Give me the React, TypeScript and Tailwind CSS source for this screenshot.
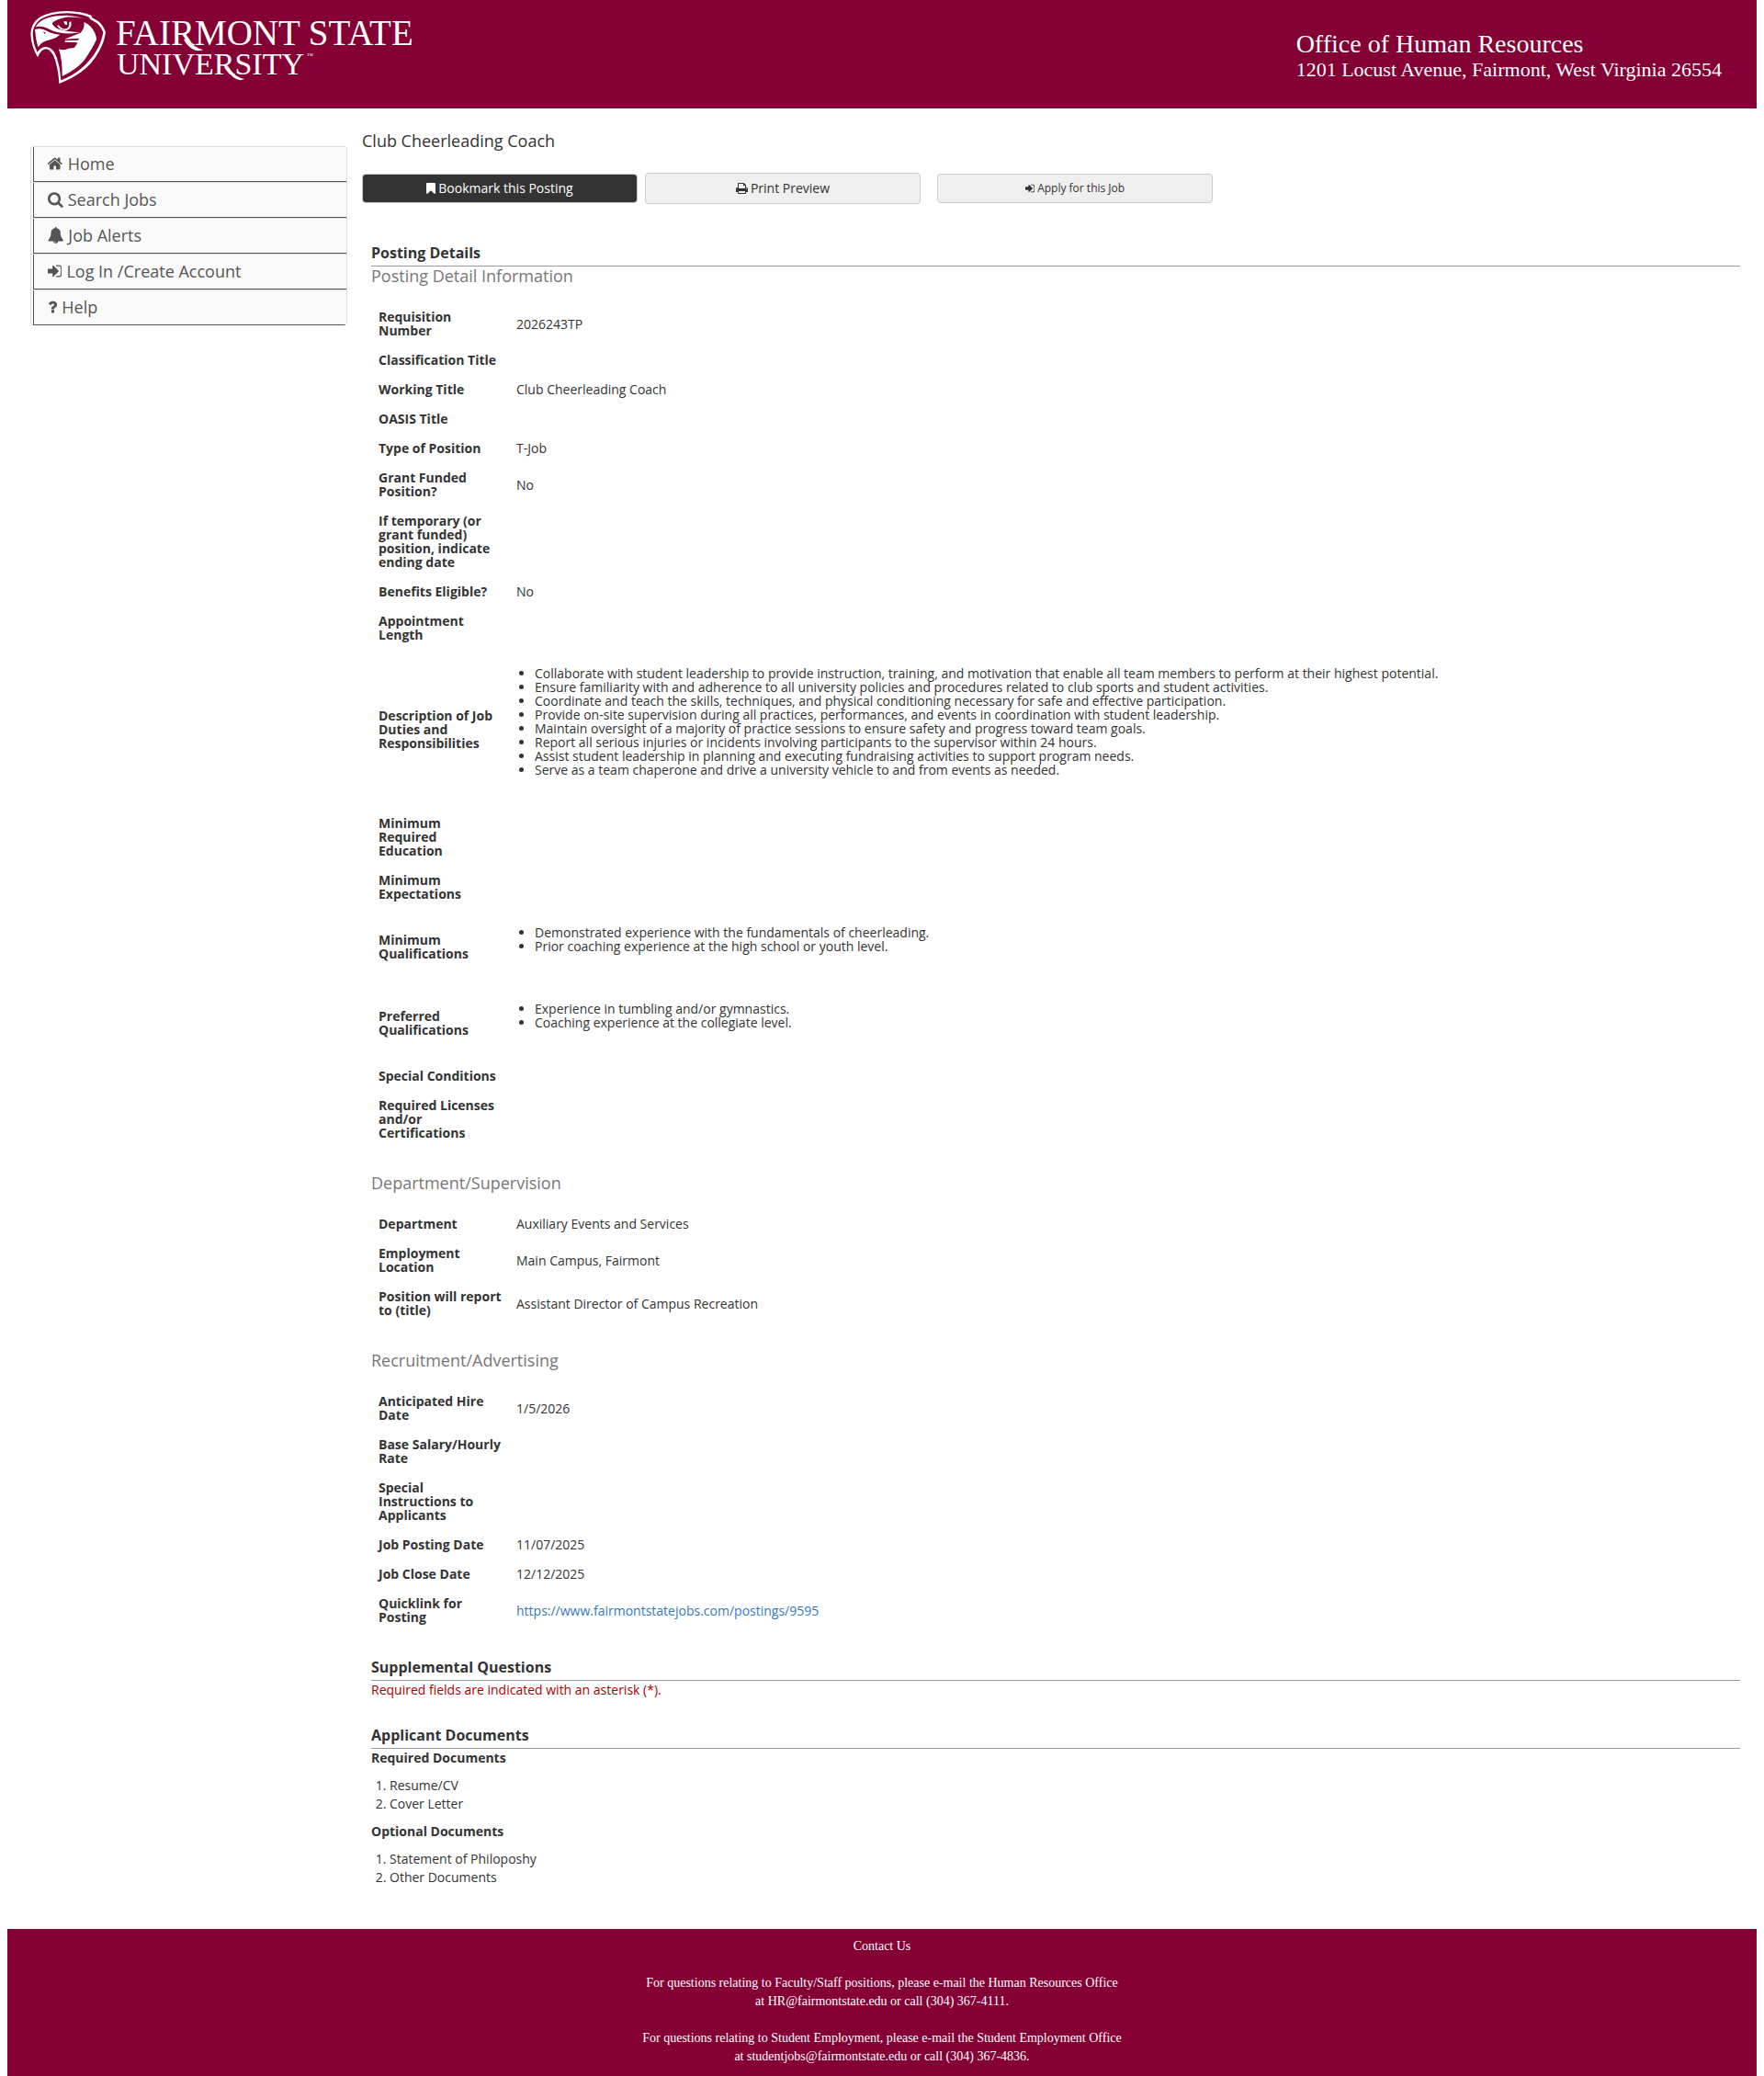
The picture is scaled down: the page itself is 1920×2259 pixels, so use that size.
import type { ReactNode } from "react";

type IconName = "home" | "search" | "bell" | "signIn" | "question" | "bookmark" | "print";

const ICONS: Record<IconName, { box: string; d: string }> = {
  home: {
    box: "64 0 1664 1792",
    d: "M1408 992v480q0 26-19 45t-45 19h-384v-384h-256v384h-384q-26 0-45-19t-19-45v-480q0-1 .5-3t.5-3l575-474 575 474q1 2 1 6zm223-69l-62 74q-8 9-21 11h-3q-13 0-21-7l-692-577-692 577q-12 8-24 7-13-2-21-11l-62-74q-8-10-7-23.5t11-21.5l719-599q32-26 76-26t76 26l244 204v-195q0-14 9-23t23-9h192q14 0 23 9t9 23v408l219 182q10 8 11 21.5t-7 23.5z",
  },
  search: {
    box: "64 0 1664 1792",
    d: "M1216 832q0-185-131.5-316.5t-316.5-131.5-316.5 131.5-131.5 316.5 131.5 316.5 316.5 131.5 316.5-131.5 131.5-316.5zm512 832q0 52-38 90t-90 38q-54 0-90-38l-343-342q-179 124-399 124-143 0-273.5-55.5t-225-150-150-225-55.5-273.5 55.5-273.5 150-225 225-150 273.5-55.5 273.5 55.5 225 150 150 225 55.5 273.5q0 220-124 399l343 343q37 37 37 90z",
  },
  bell: {
    box: "32 0 1728 1792",
    d: "M912 1696q0-16-16-16-59 0-101.5-42.5t-42.5-101.5q0-16-16-16t-16 16q0 73 51.5 124.5t124.5 51.5q16 0 16-16zm816-288q0 52-38 90t-90 38h-448q0 106-75 181t-181 75-181-75-75-181h-448q-52 0-90-38t-38-90q50-42 91-88t85-119.5 74.5-158.5 50-206 19.5-260q0-152 117-282.5t307-158.5q-8-19-8-39 0-40 28-68t68-28 68 28 28 68q0 20-8 39 190 28 307 158.5t117 282.5q0 139 19.5 260t50 206 74.5 158.5 85 119.5 91 88z",
  },
  signIn: {
    box: "128 0 1536 1792",
    d: "M1312 896q0 26-19 45l-544 544q-19 19-45 19t-45-19-19-45v-288h-448q-26 0-45-19t-19-45v-384q0-26 19-45t45-19h448v-288q0-26 19-45t45-19 45 19l544 544q19 19 19 45zm352-352v704q0 119-84.5 203.5t-203.5 84.5h-320q-13 0-22.5-9.5t-9.5-22.5q0-4-1-20t-.5-26.5 3-23.5 10-19.5 20.5-6.5h320q66 0 113-47t47-113v-704q0-66-47-113t-113-47h-312l-11.5-1-11.5-3-8-5.5-7-9-2-13.5q0-4-1-20t-.5-26.5 3-23.5 10-19.5 20.5-6.5h320q119 0 203.5 84.5t84.5 203.5z",
  },
  question: {
    box: "384 0 1024 1792",
    d: "M1088 1256v240q0 16-12 28t-28 12h-240q-16 0-28-12t-12-28v-240q0-16 12-28t28-12h240q16 0 28 12t12 28zm316-600q0 54-15.5 101t-35 76.5-55 59.5-57.5 43.5-61 35.5q-41 23-68.5 65t-27.5 67q0 17-12 32.5t-28 15.5h-240q-15 0-25.5-18.5t-10.5-37.5v-45q0-83 65-156.5t143-108.5q59-27 84-56t25-76q0-42-46.5-74t-107.5-32q-65 0-108 29-35 25-107 115-13 16-31 16-12 0-25-8l-164-125q-13-10-15.5-25t5.5-28q160-266 464-266 80 0 161 31t146 83 106 127.5 41 158.5z",
  },
  bookmark: {
    box: "256 0 1280 1792",
    d: "M1420 128q23 0 44 9 33 13 52.5 41t19.5 62v1289q0 34-19.5 62t-52.5 41q-19 8-44 8-48 0-83-32l-441-424-441 424q-36 33-83 33-23 0-44-9-33-13-52.5-41t-19.5-62v-1289q0-34 19.5-62t52.5-41q21-9 44-9h1048z",
  },
  print: {
    box: "64 0 1664 1792",
    d: "M448 1536h896v-256h-896v256zm0-640h896v-384h-160q-40 0-68-28t-28-68v-160h-640v640zm1152 64q0-26-19-45t-45-19-45 19-19 45 19 45 45 19 45-19 19-45zm128 0v416q0 13-9.5 22.5t-22.5 9.5h-224v160q0 40-28 68t-68 28h-960q-40 0-68-28t-28-68v-160h-224q-13 0-22.5-9.5t-9.5-22.5v-416q0-79 56.5-135.5t135.5-56.5h64v-544q0-40 28-68t68-28h672q40 0 88 20t76 48l152 152q28 28 48 76t20 88v256h64q79 0 135.5 56.5t56.5 135.5z",
  },
};

function Icon({ name, className }: { name: IconName; className: string }) {
  return (
    <svg viewBox={ICONS[name].box} className={`w-auto shrink-0 fill-current ${className}`} aria-hidden="true">
      <path d={ICONS[name].d} />
    </svg>
  );
}

function Logo() {
  return (
    <svg viewBox="0 0 440 96" className="h-24 w-[440px] shrink-0" role="img" aria-label="Fairmont State University">
      <g transform="scale(0.33333)">
        <path
          fill="#fff"
          d="M63 187Q42 152 40 112Q40 78 68 57Q104 36 160 36Q204 37 238 50L241 58L262 70Q276 82 285 104Q281 138 262 170Q241 208 205 235Q174 258 133 273Q131 232 120 196Q110 165 92 160Q74 160 63 187Z"
        />
        <path
          fill="#840034"
          d="M62 170Q47 140 47 108Q48 82 72 63Q105 44 160 43Q200 44 231 56L235 63L257 76Q270 88 277 105Q272 137 255 165Q233 202 200 228Q173 249 139 262Q138 226 126 190Q116 157 92 153Q73 153 62 170Z"
        />
        <path
          fill="#fff"
          d="M56 88Q68 66 100 57Q124 50 160 50Q190 52 212 60Q180 55 156 56Q122 62 110 76Q114 90 137 97Q172 107 203 105L180 109Q132 112 102 96Q76 82 56 88Z"
        />
        <path
          fill="#fff"
          d="M54 96Q76 90 95 102Q112 112 136 113Q124 125 106 129Q76 134 64 154Q56 126 54 96Z"
        />
        <path
          fill="#fff"
          d="M132 160Q146 166 164 158L182 156Q190 148 193 139L152 137L152 133L195 131L199 125L150 128L203 107Q218 92 214 72Q238 82 250 108Q255 120 255 129Q240 162 214 198Q188 228 143 249Q144 198 132 160Z"
        />
        <path fill="#fff" d="M132 82Q140 96 154 94Q168 92 166 72L172 70Q176 92 160 98Q138 102 126 84ZM148 70Q150 84 160 80L158 70Z" />
        <path fill="#840034" d="M80 103L90 107L86 111Z" />
      </g>
      <g fill="#fff" className="font-['Liberation_Serif',serif]">
        <text x="106" y="49" fontSize="39">FAIRMONT STATE</text>
        <text x="107" y="81" fontSize="34">UNIVERSITY</text>
        <text x="314" y="63" fontSize="7">™</text>
      </g>
      <path fill="#fff" d="M184 42Q191 52 201 54Q195 57 189 53Q183 49 180 43ZM228 72Q235 84 246 86Q240 89 234 84Q227 78 224 73Z" />
    </svg>
  );
}

const MENU: { icon: IconName; label: string }[] = [
  { icon: "home", label: "Home" },
  { icon: "search", label: "Search Jobs" },
  { icon: "bell", label: "Job Alerts" },
  { icon: "signIn", label: "Log In /Create Account" },
  { icon: "question", label: "Help" },
];

function Bullets({ items }: { items: string[] }) {
  return (
    <ul className="mt-2.5 mb-[26px] list-disc pl-5">
      {items.map((item) => (
        <li key={item}>{item}</li>
      ))}
    </ul>
  );
}

type Row = [string, ReactNode?];

const DETAILS: Row[] = [
  ["Requisition Number", "2026243TP"],
  ["Classification Title"],
  ["Working Title", "Club Cheerleading Coach"],
  ["OASIS Title"],
  ["Type of Position", "T-Job"],
  ["Grant Funded Position?", "No"],
  ["If temporary (or grant funded) position, indicate ending date"],
  ["Benefits Eligible?", "No"],
  ["Appointment Length"],
  [
    "Description of Job Duties and Responsibilities",
    <Bullets
      items={[
        "Collaborate with student leadership to provide instruction, training, and motivation that enable all team members to perform at their highest potential.",
        "Ensure familiarity with and adherence to all university policies and procedures related to club sports and student activities.",
        "Coordinate and teach the skills, techniques, and physical conditioning necessary for safe and effective participation.",
        "Provide on-site supervision during all practices, performances, and events in coordination with student leadership.",
        "Maintain oversight of a majority of practice sessions to ensure safety and progress toward team goals.",
        "Report all serious injuries or incidents involving participants to the supervisor within 24 hours.",
        "Assist student leadership in planning and executing fundraising activities to support program needs.",
        "Serve as a team chaperone and drive a university vehicle to and from events as needed.",
      ]}
    />,
  ],
  ["Minimum Required Education"],
  ["Minimum Expectations"],
  [
    "Minimum Qualifications",
    <Bullets
      items={[
        "Demonstrated experience with the fundamentals of cheerleading.",
        "Prior coaching experience at the high school or youth level.",
      ]}
    />,
  ],
  [
    "Preferred Qualifications",
    <Bullets items={["Experience in tumbling and/or gymnastics.", "Coaching experience at the collegiate level."]} />,
  ],
  ["Special Conditions"],
  ["Required Licenses and/or Certifications"],
];

const DEPARTMENT: Row[] = [
  ["Department", "Auxiliary Events and Services"],
  ["Employment Location", "Main Campus, Fairmont"],
  ["Position will report to (title)", "Assistant Director of Campus Recreation"],
];

const RECRUITMENT: Row[] = [
  ["Anticipated Hire Date", "1/5/2026"],
  ["Base Salary/Hourly Rate"],
  ["Special Instructions to Applicants"],
  ["Job Posting Date", "11/07/2025"],
  ["Job Close Date", "12/12/2025"],
  [
    "Quicklink for Posting",
    <a href="#quicklink" className="text-[#337ab7]">
      https://www.fairmontstatejobs.com/postings/9595
    </a>,
  ],
];

function DetailTable({ title, rows }: { title: string; rows: Row[] }) {
  return (
    <section className="mb-7">
      <h3 className="text-lg leading-5 text-[#777]">{title}</h3>
      <table className="mt-[19px] w-full table-fixed leading-[15px]">
        <colgroup>
          <col className="w-[150px]" />
          <col />
        </colgroup>
        <tbody>
          {rows.map(([label, value]) => (
            <tr key={label}>
              <th scope="row" className="px-2 pt-2 pb-[9px] text-left align-middle font-bold">
                {label}
              </th>
              <td className="px-2 pt-2 pb-[9px] align-middle">{value}</td>
            </tr>
          ))}
        </tbody>
      </table>
    </section>
  );
}

function SectionTitle({ children }: { children: ReactNode }) {
  return <h2 className="border-b border-[#999] pb-1 text-base leading-5 font-bold">{children}</h2>;
}

function DocumentList({ title, items }: { title: string; items: string[] }) {
  return (
    <>
      <h3 className="font-bold">{title}</h3>
      <ol className="my-2.5 list-decimal pl-5">
        {items.map((item) => (
          <li key={item}>{item}</li>
        ))}
      </ol>
    </>
  );
}

export default function App() {
  return (
    <div className="mx-2 bg-white font-['Open_Sans',sans-serif] text-sm leading-5 text-[#333]">
      <header className="flex h-[118px] items-start justify-between bg-[#840034] pl-3 font-['Liberation_Serif',serif] text-white">
        <a href="#top">
          <Logo />
        </a>
        <div className="mr-[38px] pt-8">
          <p className="text-[28px] leading-8">Office of Human Resources</p>
          <p className="text-[22px] leading-6">1201 Locust Avenue, Fairmont, West Virginia 26554</p>
        </div>
      </header>

      <div className="flex items-start">
        <nav className="mt-[41px] ml-[25px] w-[345px] shrink-0 overflow-hidden rounded border border-b-0 border-[#ddd]">
          <ul>
            {MENU.map(({ icon, label }) => (
              <li key={label} className="border-t border-[#ddd] pl-0.5 first:border-t-0">
                <a
                  href={`#${icon}`}
                  className="flex h-[38px] items-center gap-[5px] border-b border-l border-[#555] bg-[#fafafa] pb-0.5 pl-[15px] text-lg text-[#555]"
                >
                  <Icon name={icon} className="h-[18px]" />
                  {label}
                </a>
              </li>
            ))}
          </ul>
        </nav>

        <main className="ml-4 min-w-0 flex-1 pt-[25px] pr-[18px]">
          <h1 className="text-lg leading-5">Club Cheerleading Coach</h1>
          <div className="mt-[25px] flex items-center">
            <button
              type="button"
              className="flex h-8 w-[300px] items-center justify-center gap-[3px] rounded border border-[#ccc] bg-[#333] text-white"
            >
              <Icon name="bookmark" className="h-3.5" />
              Bookmark this Posting
            </button>
            <button
              type="button"
              className="ml-2 flex h-[34px] w-[300px] items-center justify-center gap-[3px] rounded border border-[#ccc] bg-[#efefef]"
            >
              <Icon name="print" className="h-3.5" />
              Print Preview
            </button>
            <button
              type="button"
              className="ml-[18px] flex h-8 w-[300px] items-center justify-center gap-[3px] rounded border border-[#ccc] bg-[#efefef] text-xs"
            >
              <Icon name="signIn" className="h-3" />
              Apply for this Job
            </button>
          </div>

          <div className="mt-[43px] ml-2.5">
            <SectionTitle>Posting Details</SectionTitle>
            <DetailTable title="Posting Detail Information" rows={DETAILS} />
            <DetailTable title="Department/Supervision" rows={DEPARTMENT} />
            <DetailTable title="Recruitment/Advertising" rows={RECRUITMENT} />

            <SectionTitle>Supplemental Questions</SectionTitle>
            <p className="mb-[29px] text-[#a00]">Required fields are indicated with an asterisk (*).</p>

            <SectionTitle>Applicant Documents</SectionTitle>
            <DocumentList title="Required Documents" items={["Resume/CV", "Cover Letter"]} />
            <DocumentList title="Optional Documents" items={["Statement of Philoposhy", "Other Documents"]} />
          </div>
        </main>
      </div>

      <footer className="mt-9 bg-[#840034] pt-[9px] pb-[11px] text-center font-['Liberation_Serif',serif] text-white">
        <p className="mb-5">Contact Us</p>
        <p className="mb-5">
          For questions relating to Faculty/Staff positions, please e-mail the Human Resources Office
          <br />
          at HR@fairmontstate.edu or call (304) 367-4111.
        </p>
        <p>
          For questions relating to Student Employment, please e-mail the Student Employment Office
          <br />
          at studentjobs@fairmontstate.edu or call (304) 367-4836.
        </p>
      </footer>
    </div>
  );
}
